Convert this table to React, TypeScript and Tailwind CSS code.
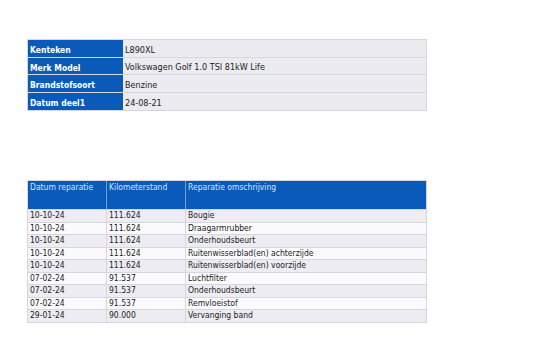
const vehicle = [
  ["Kenteken", "L890XL"],
  ["Merk Model", "Volkswagen Golf 1.0 TSI 81kW Life"],
  ["Brandstofsoort", "Benzine"],
  ["Datum deel1", "24-08-21"],
];

const repairs = [
  ["10-10-24", "111.624", "Bougie"],
  ["10-10-24", "111.624", "Draagarmrubber"],
  ["10-10-24", "111.624", "Onderhoudsbeurt"],
  ["10-10-24", "111.624", "Ruitenwisserblad(en) achterzijde"],
  ["10-10-24", "111.624", "Ruitenwisserblad(en) voorzijde"],
  ["07-02-24", "91.537", "Luchtfilter"],
  ["07-02-24", "91.537", "Onderhoudsbeurt"],
  ["07-02-24", "91.537", "Remvloeistof"],
  ["29-01-24", "90.000", "Vervanging band"],
];

export default function App() {
  return (
    <div className="h-[360px] w-[540px] bg-white font-['DejaVu_Sans_Condensed','Liberation_Sans',sans-serif] text-[8.5px] text-[#222]">
      <div className="pl-[27px] pt-[39px]">
        <div className="w-[400px] border border-[#d6d6de]">
          {vehicle.map(([label, value]) => (
            <div key={label} className="grid h-[17.5px] grid-cols-[95px_1fr] border-b border-[#d6d6de] leading-[10px] last:border-b-0">
              <div className="flex items-center bg-[#0a5bb9] px-[2px] pt-[4px] font-bold text-white">{label}</div>
              <div className="flex items-center bg-[#ebebf0] px-[2px] pt-[3px] text-[9px]">{value}</div>
            </div>
          ))}
        </div>

        <div className="mt-[69px] w-[400px] border border-[#d6d6de]">
          <div className="grid h-[28px] grid-cols-[79px_79px_1fr] bg-[#0a5bb9] leading-[11px] text-[#d4e4f7]">
            <div className="border-r border-[#6d9fd8] px-[2px] pt-[1px]">Datum reparatie</div>
            <div className="border-r border-[#6d9fd8] px-[2px] pt-[1px]">Kilometerstand</div>
            <div className="px-[2px] pt-[1px]">Reparatie omschrijving</div>
          </div>
          {repairs.map(([date, km, desc], i) => (
            <div
              key={i}
              className={`grid h-[12.5px] grid-cols-[79px_79px_1fr] border-t border-[#d6d6de] leading-[11px] ${
                i % 2 === 0 ? "bg-[#ececf2]" : "bg-[#fbfbfd]"
              }`}
            >
              <div className="border-r border-[#d6d6de] px-[2px]">{date}</div>
              <div className="border-r border-[#d6d6de] px-[2px]">{km}</div>
              <div className="px-[2px]">{desc}</div>
            </div>
          ))}
        </div>
      </div>
    </div>
  );
}
